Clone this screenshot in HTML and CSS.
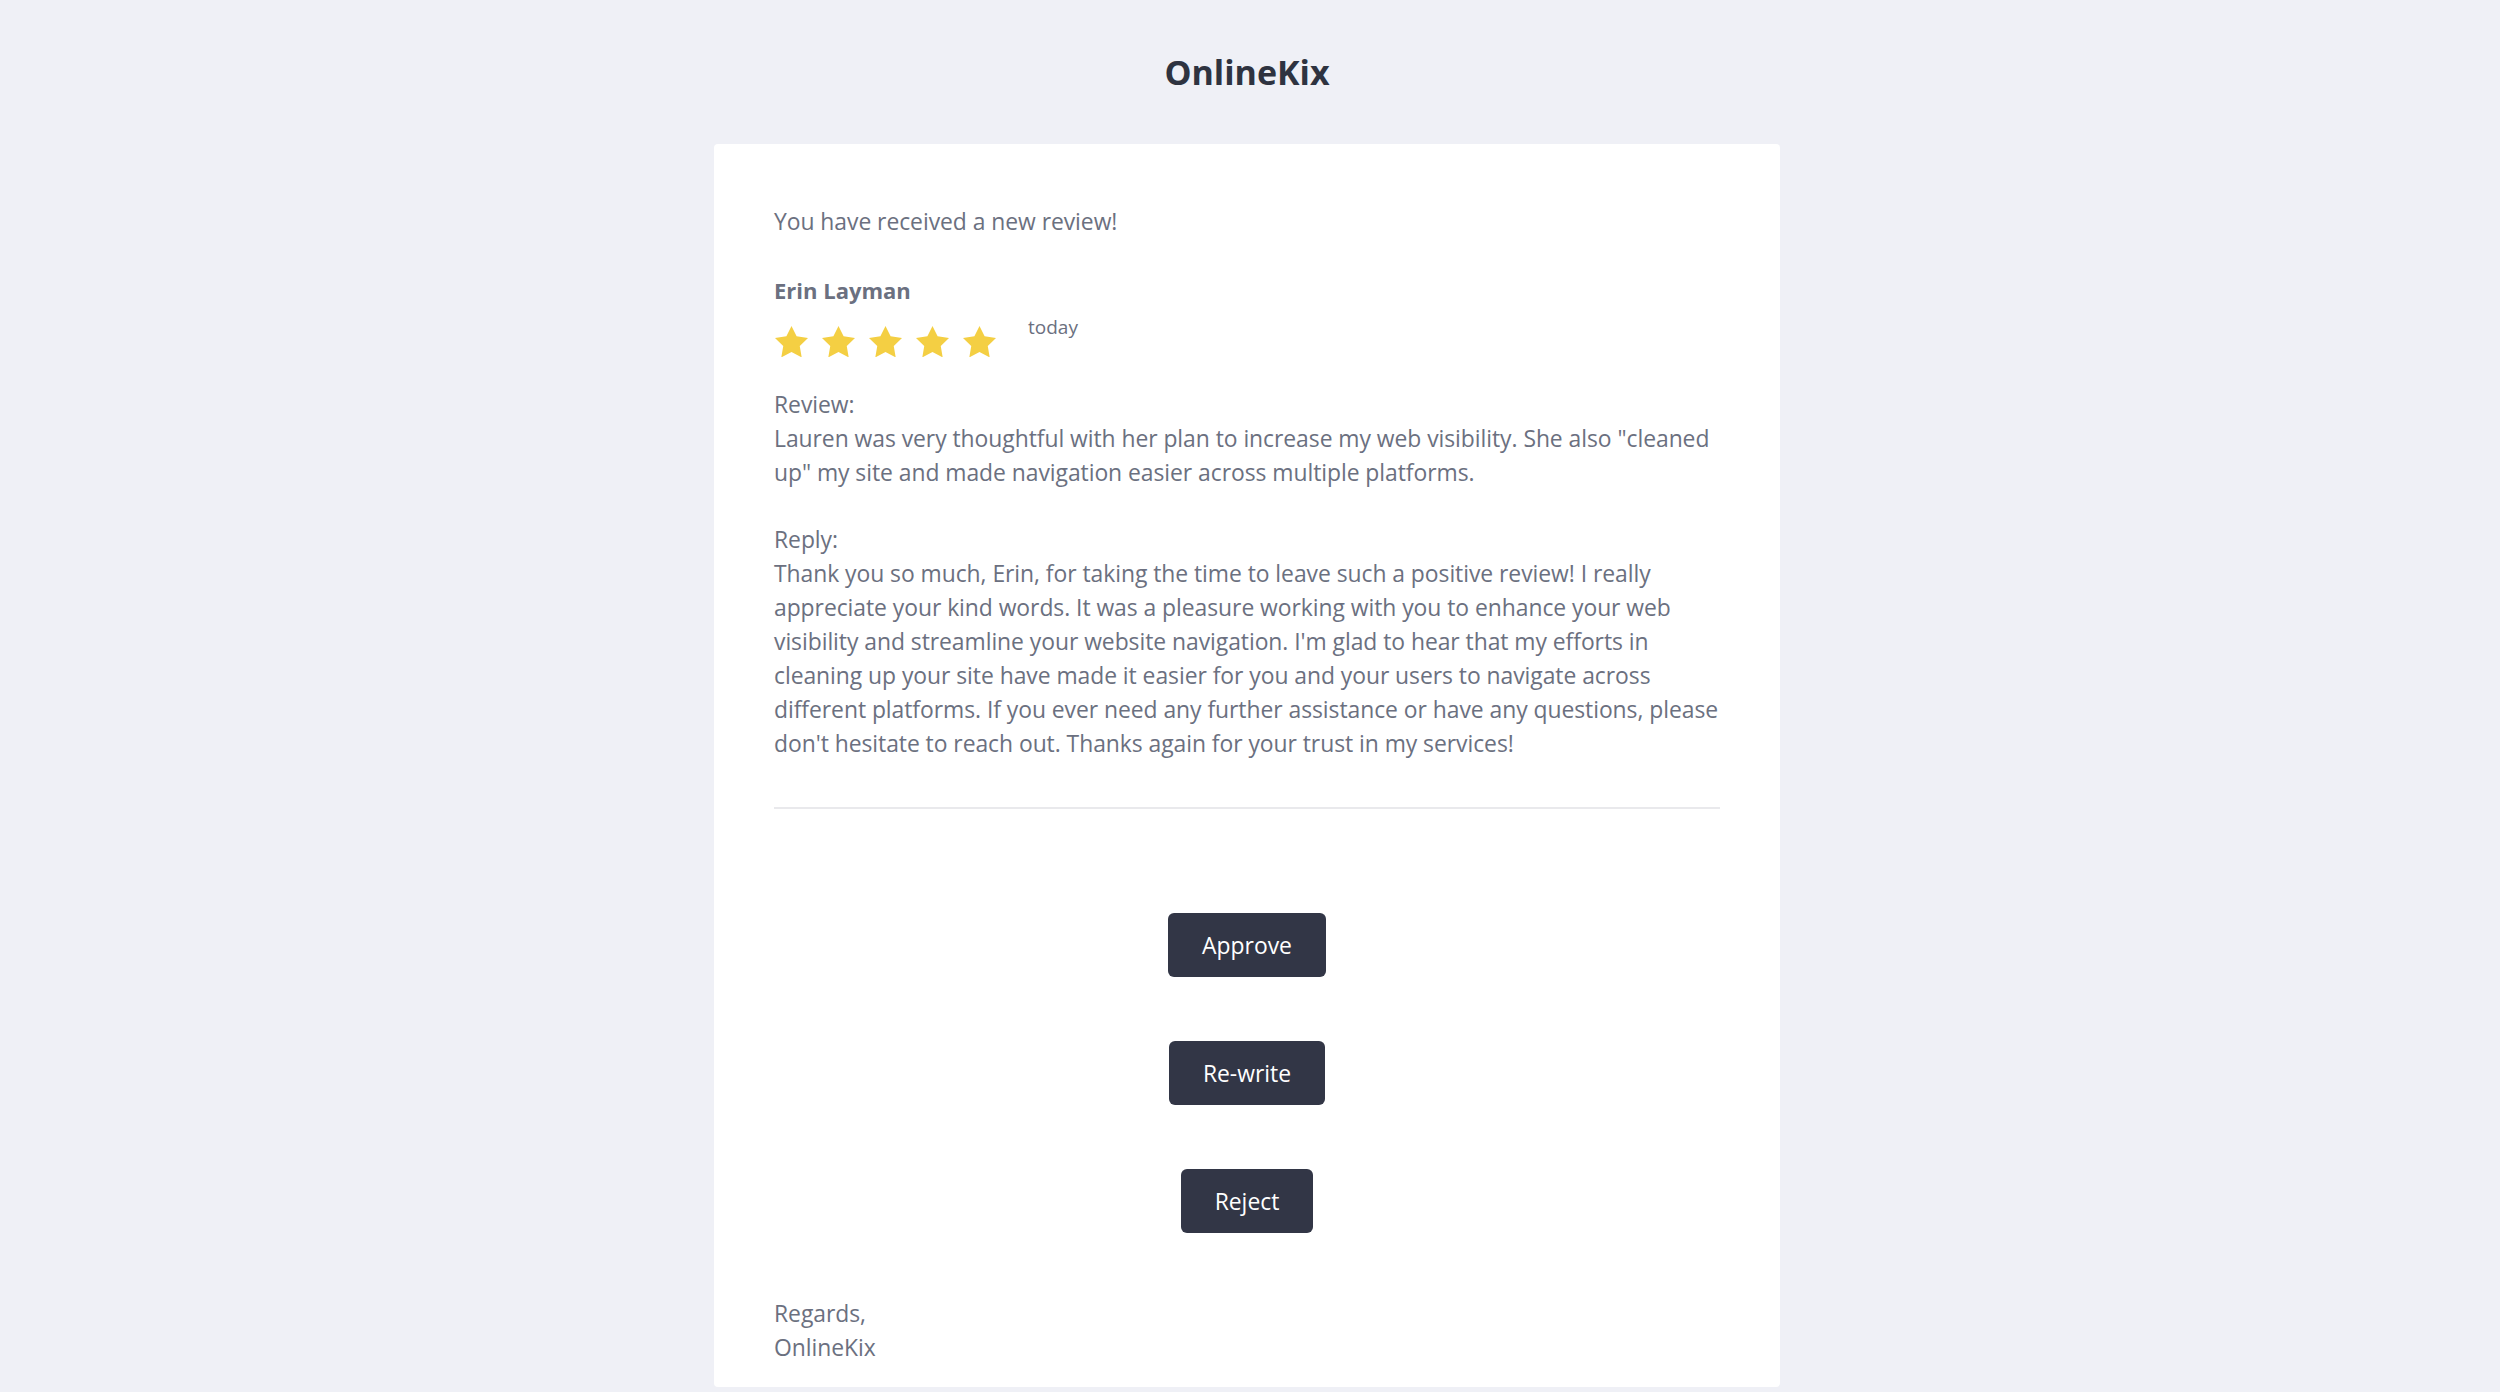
FILE: index.html
```html
<!DOCTYPE html>
<html lang="en">
<head>
<meta charset="utf-8">
<title>OnlineKix</title>
<link rel="stylesheet" href="styles.css">
</head>
<body>
<div class="page">
  <header class="brand">OnlineKix</header>
  <main class="card">
    <p class="intro">You have received a new review!</p>
    <div class="reviewer">Erin Layman</div>
    <div class="rating-row">
      <div class="stars">
        <svg class="star" viewBox="2 2 20 19.02"><path d="M12 2l3.09 6.26L22 9.27l-5 4.87 1.18 6.88L12 17.77l-6.18 3.25L7 14.14 2 9.27l6.91-1.01L12 2z"/></svg>
        <svg class="star" viewBox="2 2 20 19.02"><path d="M12 2l3.09 6.26L22 9.27l-5 4.87 1.18 6.88L12 17.77l-6.18 3.25L7 14.14 2 9.27l6.91-1.01L12 2z"/></svg>
        <svg class="star" viewBox="2 2 20 19.02"><path d="M12 2l3.09 6.26L22 9.27l-5 4.87 1.18 6.88L12 17.77l-6.18 3.25L7 14.14 2 9.27l6.91-1.01L12 2z"/></svg>
        <svg class="star" viewBox="2 2 20 19.02"><path d="M12 2l3.09 6.26L22 9.27l-5 4.87 1.18 6.88L12 17.77l-6.18 3.25L7 14.14 2 9.27l6.91-1.01L12 2z"/></svg>
        <svg class="star" viewBox="2 2 20 19.02"><path d="M12 2l3.09 6.26L22 9.27l-5 4.87 1.18 6.88L12 17.77l-6.18 3.25L7 14.14 2 9.27l6.91-1.01L12 2z"/></svg>
      </div>
      <span class="date">today</span>
    </div>
    <div class="block review">
      <div class="label">Review:</div>
      <p class="text">Lauren was very thoughtful with her plan to increase my web visibility. She also "cleaned up" my site and made navigation easier across multiple platforms.</p>
    </div>
    <div class="block reply">
      <div class="label">Reply:</div>
      <p class="text">Thank you so much, Erin, for taking the time to leave such a positive review! I really appreciate your kind words. It was a pleasure working with you to enhance your web visibility and streamline your website navigation. I'm glad to hear that my efforts in cleaning up your site have made it easier for you and your users to navigate across different platforms. If you ever need any further assistance or have any questions, please don't hesitate to reach out. Thanks again for your trust in my services!</p>
    </div>
    <hr class="divider">
    <div class="actions">
      <button class="btn" type="button">Approve</button>
      <button class="btn" type="button">Re-write</button>
      <button class="btn" type="button">Reject</button>
    </div>
    <p class="signoff">Regards,<br>OnlineKix</p>
  </main>
</div>
</body>
</html>
```
FILE: styles.css
```css
* { box-sizing: border-box; }
html, body { margin: 0; padding: 0; }
body {
  background: #eff0f6;
  font-family: "Open Sans", "Noto Sans", sans-serif;
  color: #6b7080;
  height: 1392px;
  overflow: hidden;
}
.page {
  display: flex;
  flex-direction: column;
  align-items: center;
  padding-right: 6px;
}
.brand {
  padding: 49px 0;
  font-size: 34px;
  line-height: 46px;
  font-weight: 700;
  color: #2e3340;
}
.card {
  width: 1066px;
  background: #ffffff;
  border-radius: 4px;
  padding: 61px 60px 22px;
  font-size: 22.9px;
  line-height: 34px;
  letter-spacing: -0.05px;
}
p { margin: 0; }
.intro { margin: 0; }
.reviewer {
  margin-top: 34px;
  font-size: 22px;
  font-weight: 700;
  letter-spacing: 0;
  color: #6b7080;
}
.rating-row {
  display: flex;
  align-items: flex-start;
  margin-top: 7px;
}
.stars {
  display: flex;
  gap: 14px;
  padding-top: 12px;
  padding-left: 1px;
}
.star {
  display: block;
  width: 33px;
  height: 31.4px;
  fill: #f4cf43;
}
.date {
  margin-left: 32px;
  font-size: 19px;
  line-height: 26px;
  letter-spacing: 0;
  color: #6b7080;
}
.review { margin-top: 31px; }
.reply { margin-top: 33px; }
.divider {
  border: 0;
  height: 2px;
  background: #e9e9ec;
  margin: 46px 0 0;
}
.actions {
  display: flex;
  flex-direction: column;
  align-items: center;
  gap: 64px;
  margin-top: 104px;
}
.btn {
  height: 64px;
  padding: 0 34px;
  border: 0;
  border-radius: 6px;
  background: #323646;
  color: #ffffff;
  font-family: "Open Sans", "Noto Sans", sans-serif;
  font-size: 22.9px;
  font-weight: 500;
  cursor: pointer;
}
.signoff { margin-top: 64px; }
```
